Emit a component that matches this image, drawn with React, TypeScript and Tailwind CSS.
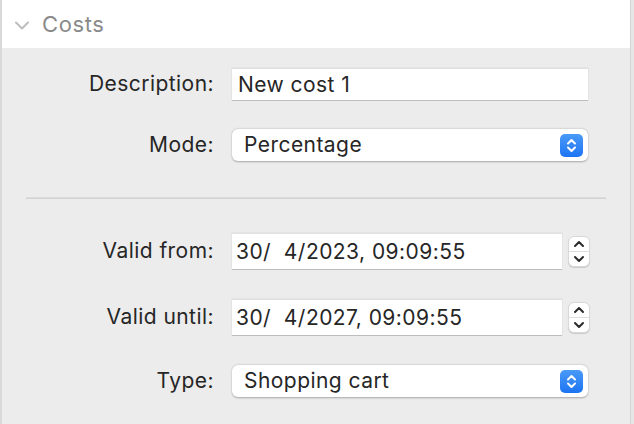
import React from 'react';

const font = { fontFamily: 'Inter, "Liberation Sans", sans-serif' };

function BlueStepper() {
  return (
    <div className="w-[23px] h-[23px] rounded-[5px] bg-gradient-to-b from-[#4a9af8] to-[#1b74f2] flex items-center justify-center">
      <svg width="11" height="15" viewBox="0 0 11 15" fill="none" stroke="white" strokeWidth="2" strokeLinecap="round" strokeLinejoin="round">
        <path d="M2 5.5 L5.5 2 L9 5.5" />
        <path d="M2 9.5 L5.5 13 L9 9.5" />
      </svg>
    </div>
  );
}

function DateStepper() {
  return (
    <div className="w-[22px] h-[31px] rounded-[6px] bg-white border border-[#d8d8d8] shadow-[0_1px_1px_rgba(0,0,0,0.15)] flex flex-col">
      <div className="flex-1 flex items-center justify-center border-b border-[#dedede]">
        <svg width="12" height="8" viewBox="0 0 12 8" fill="none" stroke="#2a2a2a" strokeWidth="2" strokeLinecap="round" strokeLinejoin="round">
          <path d="M2 6 L6 2 L10 6" />
        </svg>
      </div>
      <div className="flex-1 flex items-center justify-center">
        <svg width="12" height="8" viewBox="0 0 12 8" fill="none" stroke="#2a2a2a" strokeWidth="2" strokeLinecap="round" strokeLinejoin="round">
          <path d="M2 2 L6 6 L10 2" />
        </svg>
      </div>
    </div>
  );
}

function Label({ children }: { children: React.ReactNode }) {
  return <div className="text-right text-[21px] tracking-[0.45px] text-[#262626]">{children}</div>;
}

function TextField({ value }: { value: string }) {
  return (
    <div className="w-[356px] h-[32px] bg-white border-t border-[#e0e0e0] shadow-[0_1px_0_#bdbdbd,0_0_0_0.5px_#dcdcdc] flex items-center pl-[6px] text-[21px] tracking-[0.45px] text-[#262626]">
      {value}
    </div>
  );
}

function Popup({ value }: { value: string }) {
  return (
    <div className="w-[356px] h-[32px] bg-white rounded-[6px] shadow-[0_0.5px_2px_rgba(0,0,0,0.3)] flex items-center justify-between pl-[12px] pr-[5px] text-[21px] tracking-[0.45px] text-[#262626]">
      <span>{value}</span>
      <BlueStepper />
    </div>
  );
}

function DateField({ value }: { value: string }) {
  return (
    <div className="flex items-center gap-[6px]">
      <div className="w-[330px] h-[36px] bg-white border-t border-[#e0e0e0] shadow-[0_1px_0_#bdbdbd,0_0_0_0.5px_#dcdcdc] flex items-center pl-[4px] text-[21px] tracking-[0.45px] text-[#262626] whitespace-pre">
        {value}
      </div>
      <DateStepper />
    </div>
  );
}

export default function App() {
  return (
    <div style={font} className="w-[634px] h-[424px] flex bg-[#e9e9e9] overflow-hidden">
      <div className="w-[2px] bg-[#d9d9d9]" />
      <div className="w-[628px] flex flex-col">
        <div className="h-[48px] bg-white flex items-center">
          <svg className="ml-[12px] mt-[2px]" width="16" height="9" viewBox="0 0 16 9" fill="none" stroke="#bdbdbd" strokeWidth="2" strokeLinecap="round" strokeLinejoin="round">
            <path d="M2 1.5 L8 7.5 L14 1.5" />
          </svg>
          <span className="ml-[12px] text-[22px] tracking-[0.6px] text-[#8a8a8a]">Costs</span>
        </div>
        <div className="flex-1 bg-[#ececec] flex flex-col">
          <div className="grid grid-cols-[212px_1fr] gap-x-[18px] items-center mt-[20px] gap-y-[29px]">
            <Label>Description:</Label>
            <TextField value="New cost 1" />
            <Label>Mode:</Label>
            <Popup value="Percentage" />
          </div>
          <div className="mx-[24px] mt-[36px] h-[2px] bg-[#d3d3d3] border-t border-[#dcdcdc]" />
          <div className="grid grid-cols-[212px_1fr] gap-x-[18px] items-center mt-[34px] gap-y-[30px]">
            <Label>Valid from:</Label>
            <DateField value="30/  4/2023, 09:09:55" />
            <Label>Valid until:</Label>
            <DateField value="30/  4/2027, 09:09:55" />
          </div>
          <div className="grid grid-cols-[212px_1fr] gap-x-[18px] items-center mt-[30px]">
            <Label>Type:</Label>
            <Popup value="Shopping cart" />
          </div>
        </div>
      </div>
      <div className="w-[1px] bg-[#d6d6d6]" />
      <div className="w-[3px] bg-[#e6e6e6]" />
    </div>
  );
}
